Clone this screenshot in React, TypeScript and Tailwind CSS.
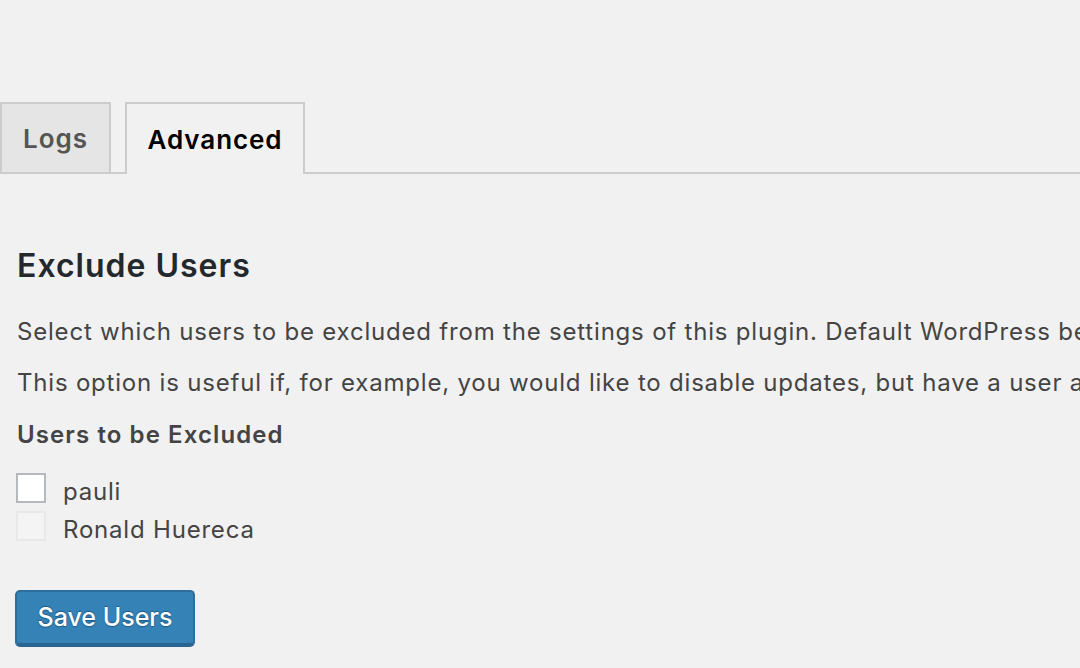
import React from "react";

const users = [
  { name: "pauli", disabled: false },
  { name: "Ronald Huereca", disabled: true },
];

export default function App() {
  return (
    <div
      className="min-h-screen w-[1080px] h-[668px] overflow-hidden bg-[#f1f1f1] text-[#444]"
      style={{ fontFamily: "Inter, 'Liberation Sans', sans-serif" }}
    >
      <div className="pt-[102px]">
        <div className="flex items-end border-b-2 border-[#ccc] h-[72px]">
          <div className="h-[72px] w-[111px] -mb-[2px] flex items-center justify-center bg-[#e5e5e5] border-2 border-[#ccc] text-[26px] tracking-[1px] font-semibold text-[#555]">
            Logs
          </div>
          <div className="ml-[14px] h-[72px] w-[180px] -mb-[2px] flex items-center justify-center bg-[#f1f1f1] border-2 border-b-0 border-[#ccc] text-[26px] tracking-[0.9px] font-semibold text-black">
            Advanced
          </div>
        </div>
      </div>

      <div className="px-[17px] pt-[70px]">
        <h2 className="text-[32px] tracking-[1px] font-semibold leading-[44px] text-[#23282d]">Exclude Users</h2>
        <p className="mt-[24px] text-[24px] tracking-[0.8px] leading-[40px] whitespace-nowrap">
          Select which users to be excluded from the settings of this plugin. Default WordPress be
        </p>
        <p className="mt-[11px] text-[24px] tracking-[0.8px] leading-[40px] whitespace-nowrap">
          This option is useful if, for example, you would like to disable updates, but have a user ac
        </p>
        <h3 className="mt-[12px] text-[24px] tracking-[1.1px] leading-[40px] font-semibold">Users to be Excluded</h3>

        <div className="mt-[18px] flex flex-col gap-[8px] -ml-px">
          {users.map((u) => (
            <label key={u.name} className="flex items-center gap-[17px] h-[30px]">
              <span
                className={
                  u.disabled
                    ? "w-[30px] h-[30px] bg-[#f4f4f4] border-2 border-[#e8e8e8]"
                    : "w-[30px] h-[30px] bg-white border-2 border-[#b4b9be]"
                }
              />
              <span className="text-[24px] tracking-[0.8px] leading-[30px] text-[#444] mt-[8px]">{u.name}</span>
            </label>
          ))}
        </div>

        <button className="mt-[49px] -ml-[2px] h-[57px] w-[180px] rounded-[5px] bg-[#3582b7] border-2 border-[#2d6e9d] border-b-[4px] border-b-[#2a6592] text-white text-[25px] font-medium [text-shadow:0_-1px_1px_#1f5a85,0_1px_1px_#1f5a85]">
          Save Users
        </button>
      </div>
    </div>
  );
}
